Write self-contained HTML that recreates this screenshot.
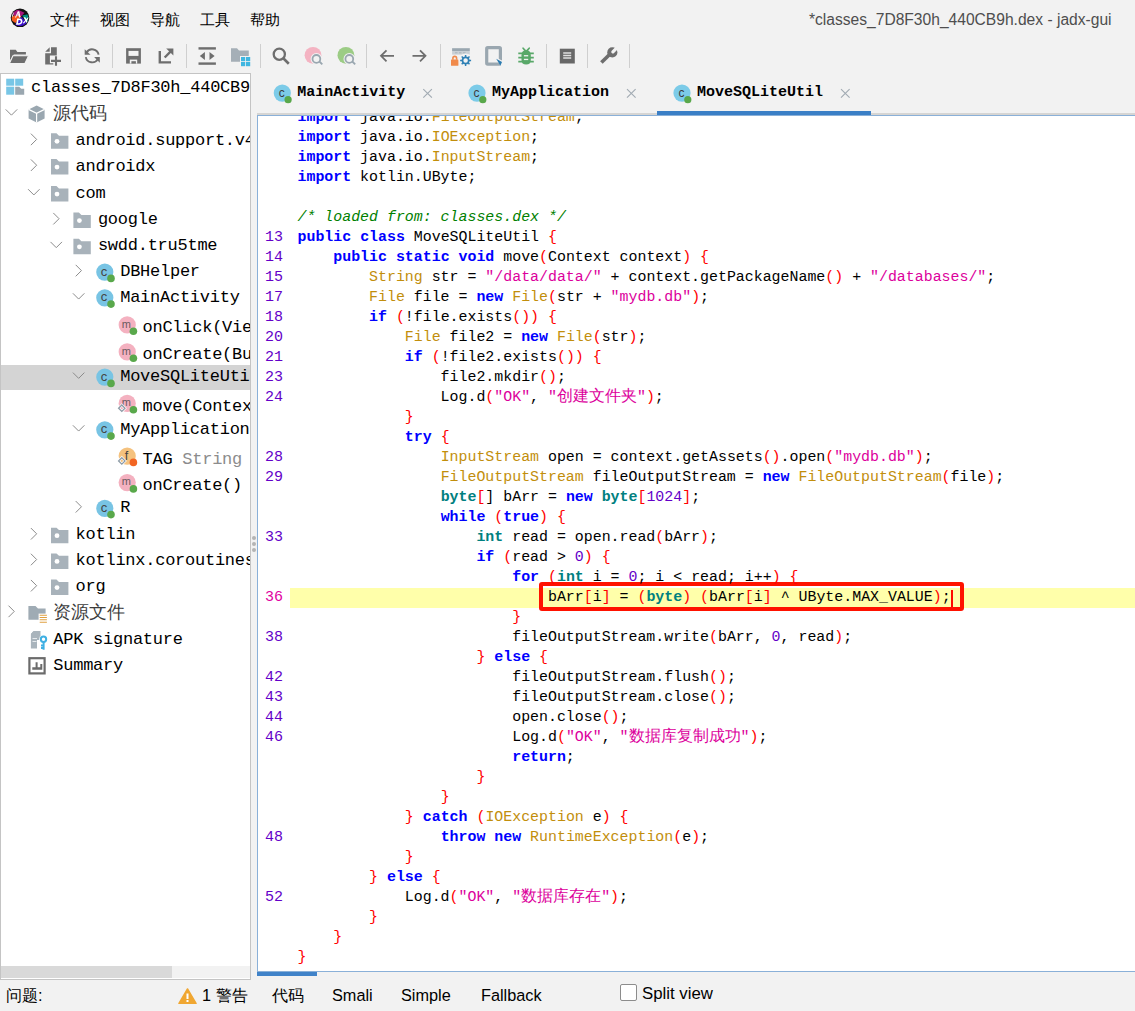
<!DOCTYPE html>
<html><head><meta charset="utf-8"><style>
*{margin:0;padding:0;box-sizing:border-box}
html,body{width:1135px;height:1011px;overflow:hidden;background:#f2f2f2;font-family:"Liberation Sans",sans-serif}
.a{position:absolute}
.menu{position:absolute;top:9.5px;font-size:15px;line-height:19px;color:#000;white-space:nowrap}
.title{position:absolute;left:809px;top:10px;font-size:15.6px;line-height:20px;color:#4e4e4e;white-space:nowrap}
.sep{position:absolute;top:44px;width:1px;height:24px;background:#cfcfcf}
#tree{position:absolute;left:0;top:73px;width:251px;height:907px;background:#fff;border:1px solid #c4c4c4;overflow:hidden}
.tr{position:absolute;font-family:"Liberation Mono",monospace;font-size:17px;letter-spacing:-0.25px;line-height:22px;white-space:nowrap;color:#000}
.gr{color:#8c8c8c}
.zh{font-family:"Liberation Serif",serif;color:#3c3c3c;font-size:18.3px;position:relative;top:-1px}
#code{position:absolute;left:257px;top:115px;width:878px;height:857px;background:#fff;border:1px solid #8ab0d8;border-right:none;overflow:hidden}
.cl{position:absolute;left:0;top:0;width:878px;height:858px}
pre,.cr{position:absolute;left:297.5px;white-space:pre;height:20px;font-family:"Liberation Mono",monospace;font-size:14.92px;line-height:20px;color:#000}
.k{color:#0000ff;font-weight:bold}
.t{color:#008080;font-weight:bold}
.c{color:#c28e0c}
.s{color:#dc009c}
.m{color:#008000;font-style:italic}
.p{color:#ff0000}
.n{color:#6400c8}
.zc{font-size:16px}
.ln{position:absolute;left:258px;width:25px;text-align:right;font-family:"Liberation Mono",monospace;font-size:15px;line-height:20px;color:#6400c8}
.ln.cur{color:#e000a0}
.tab{position:absolute;top:83px;font-family:"Liberation Mono",monospace;font-weight:bold;font-size:15px;line-height:20px;color:#000;white-space:nowrap}
.st{position:absolute;top:986px;font-size:16.3px;line-height:19px;color:#000;white-space:nowrap}
</style></head><body>
<svg class="a" style="left:0;top:0" width="1135" height="80" viewBox="0 0 1135 80">
 <defs><clipPath id="lc"><circle cx="20" cy="17.8" r="8.4"/></clipPath></defs>
 <circle cx="20" cy="17.8" r="9.3" fill="#111"/><g clip-path="url(#lc)">
 <path d="M11.5,12 L17.6,9.6 L24.5,12.8 L21.5,15.9 L14,15.8z" fill="#a3147c"/>
 <path d="M10.8,17.5 L14,15.6 L21.5,15.9 L15.4,23 L11.6,20.5z" fill="#f25a1e"/>
 <path d="M22.1,15.4 L28.9,14 L29.4,19.5 L27.2,23.6 L24,18z" fill="#009080"/>
 <path d="M14.8,24.6 L21.5,16.7 L27.2,23.6 L23.7,26.1 L17.1,26.4z" fill="#3a10c8"/>
 <path d="M12.2,12.3 L13.8,12.3 L12.8,16.8 L11,16.2z" fill="#fff"/>
 <path d="M15,17.4 L17.8,11.2 L19.3,11.2 L20.6,17.4 L19,17.4 L18.6,15.6 L16.8,15.6 L16.1,17.4z M17.2,14.4 L18.4,14.4 L18.2,12.9z" fill="#fff" fill-rule="evenodd"/>
 <path d="M17.2,18.5 L19.5,18.5 Q23.2,18.8 22.3,22.6 Q21.6,25 18.4,24.7 L16,24.7z M18.6,20 L17.9,23.3 L19,23.3 Q20.8,23.1 20.9,21.5 Q21,20 19.3,20z" fill="#fff" fill-rule="evenodd"/>
 <path d="M23.6,17.2 L25.4,17.2 L26.3,19.1 L28,17.2 L29.3,17.4 L27,20.2 L28.3,23.2 L26.7,23.4 L25.8,21.3 L23.9,23.4 L22.8,23 L25.1,20.2z" fill="#fff"/></g>
</svg>
<div class="menu" style="left:50px">文件</div>
<div class="menu" style="left:100px">视图</div>
<div class="menu" style="left:150px">导航</div>
<div class="menu" style="left:200px">工具</div>
<div class="menu" style="left:250px">帮助</div>
<div class="title">*classes_7D8F30h_440CB9h.dex - jadx-gui</div>
<svg class="a" style="left:0;top:0" width="660" height="76" viewBox="0 0 660 76">
<path d="M10,49.8 H15.8 L17.4,51.9 H25.9 V54.6 H13.8 L10,60.5z" fill="#6e6e6e"/>
<path d="M12.9,55.7 H28.6 L24.9,63.6 H9.4z" fill="#6e6e6e" stroke="#f2f2f2" stroke-width="1.1"/>
<path d="M45.2,51.7 L49.7,47.2 V51.7z" fill="#6e6e6e"/>
<path d="M45.2,53.2 H51 V47.2 H56.8 V55.4 H49.9 V63.3 H53.3 V64.6 H45.2z" fill="#6e6e6e"/>
<path d="M50.8,60.9 H61.2 M56,56 V65.8" stroke="#f2f2f2" stroke-width="3.6"/>
<path d="M51,60.9 H61 M56,56.2 V65.7" stroke="#6e6e6e" stroke-width="2.1"/>
<path d="M98.6,54.7 A6.5,6.5 0 0 0 86.57,52.6" stroke="#6e6e6e" stroke-width="1.9" fill="none"/>
<path d="M84.7,49.2 L84.7,54.7 L90.5,54.7z" fill="#6e6e6e"/>
<path d="M85.8,57.1 A6.5,6.5 0 0 0 97.83,59.1" stroke="#6e6e6e" stroke-width="1.9" fill="none"/>
<path d="M94.1,57.1 L99.8,57.1 L99.8,62.8z" fill="#6e6e6e"/>
<rect x="126.1" y="48.2" width="14.8" height="15.4" fill="#6e6e6e"/>
<rect x="128.5" y="50.9" width="10" height="5" fill="#f2f2f2"/>
<rect x="129.8" y="59.6" width="7.4" height="4" fill="#f2f2f2"/><rect x="131.4" y="61.2" width="4.5" height="2.4" fill="#6e6e6e"/>
<path d="M159.8,50.9 V62.4 H171" stroke="#6e6e6e" stroke-width="2.4" fill="none"/>
<path d="M164.7,57.5 L170.5,51.7" stroke="#6e6e6e" stroke-width="2.4"/><path d="M166.2,48.5 H173.4 V55.4z" fill="#6e6e6e"/>
<rect x="198.5" y="47.2" width="17.4" height="2.4" fill="#6e6e6e"/><rect x="198.5" y="62.4" width="17.4" height="2.4" fill="#6e6e6e"/>
<path d="M199.8,55.9 L204.9,51.9 V59.9z M214.6,55.9 L209.5,51.9 V59.9z" fill="#6e6e6e"/>
<path d="M231,48.2 H237 L239,50.5 H248.8 V61.7 H231z" fill="#a5afb7"/>
<rect x="240" y="56" width="10.6" height="10.6" fill="#f2f2f2"/>
<rect x="241" y="57" width="4.2" height="4.2" fill="#40b6e0"/><rect x="246" y="57" width="4.2" height="4.2" fill="#40b6e0"/>
<rect x="241" y="62" width="4.2" height="4.2" fill="#40b6e0"/><rect x="246" y="62" width="4.2" height="4.2" fill="#40b6e0"/>
<circle cx="279.3" cy="54.2" r="5.6" stroke="#6e6e6e" stroke-width="2.3" fill="none"/><path d="M283.3,58.3 L288.8,63.7" stroke="#6e6e6e" stroke-width="2.6"/>
<circle cx="313" cy="55.3" r="8.4" fill="#f4b3c2"/><circle cx="316.4" cy="58.9" r="5.8" fill="#f2f2f2"/>
<circle cx="316.4" cy="58.9" r="3.9" stroke="#9aa7b0" stroke-width="1.8" fill="none"/><path d="M319.4,61.5 L322.3,64.4" stroke="#9aa7b0" stroke-width="1.8"/>
<circle cx="345.9" cy="55.3" r="8.4" fill="#9ccc85"/><circle cx="349.3" cy="58.9" r="5.8" fill="#f2f2f2"/>
<circle cx="349.3" cy="58.9" r="3.9" stroke="#9aa7b0" stroke-width="1.8" fill="none"/><path d="M352.3,61.5 L355.2,64.4" stroke="#9aa7b0" stroke-width="1.8"/>
<path d="M381,55.8 H394 M386.5,50.3 L381,55.8 L386.5,61.3" stroke="#6e6e6e" stroke-width="1.8" fill="none"/>
<path d="M412.5,55.8 H425.5 M420,50.3 L425.5,55.8 L420,61.3" stroke="#6e6e6e" stroke-width="1.8" fill="none"/>
<rect x="452.1" y="48.2" width="17.7" height="2.8" fill="#9aa7b0"/><rect x="452.1" y="51" width="17.7" height="3.6" fill="#c9d0d5"/>
<path d="M455,52.8 h2.5 M459,52.8 h2.5 M463,52.8 h2.5" stroke="#aab4bb" stroke-width="1"/>
<rect x="451" y="59.6" width="7.4" height="6.1" rx="0.5" fill="#f08a4b"/><path d="M452.9,59.8 v-1.6 a1.85,1.85 0 0 1 3.7,0 v1.6" stroke="#f08a4b" stroke-width="1.6" fill="none"/>
<circle cx="465.6" cy="60.4" r="6.8" fill="#f2f2f2"/>
<circle cx="465.6" cy="60.4" r="3.1" stroke="#2f80b5" stroke-width="1.7" fill="none"/>
<path d="M465.6,54.9 V57 M465.6,63.8 V65.9 M460.1,60.4 H462.2 M469,60.4 H471.1 M461.7,56.5 L463.2,58 M468,62.8 L469.5,64.3 M469.5,56.5 L468,58 M463.2,62.8 L461.7,64.3" stroke="#2f80b5" stroke-width="1.5"/>
<rect x="486.7" y="47.7" width="13.7" height="16.4" rx="1" stroke="#9aa7b0" stroke-width="3.2" fill="none"/>
<path d="M495,57 L503.5,61.2 L501.5,67 z" fill="#f2f2f2"/>
<path d="M496.2,58.8 L502,62 L500.4,65.7 z" fill="#2b7bb0"/>
<path d="M521.5,55.2 Q521.5,50.3 526.15,50.3 Q530.8,50.3 530.8,55.2 V60 Q530.8,64.6 526.15,64.6 Q521.5,64.6 521.5,60z" fill="#59a869"/>
<path d="M518.3,53.4 H533.8 M518.3,57.6 H533.8 M518.3,61.7 H533.8" stroke="#59a869" stroke-width="1.7"/>
<path d="M523.1,48.2 L525.3,50.6 M529.2,48.2 L527,50.6" stroke="#59a869" stroke-width="1.7" stroke-linecap="round"/>
<rect x="523.9" y="55.1" width="4.3" height="1.3" fill="#f2f2f2"/><rect x="523.9" y="58.8" width="4.3" height="1.3" fill="#f2f2f2"/>
<rect x="559.8" y="48.7" width="15" height="14.8" fill="#686868"/>
<path d="M563.2,53 h8 M563.2,55.5 h8 M563.2,58 h8" stroke="#e0e0e0" stroke-width="1.3"/>
<path d="M601.4,62.6 L609.6,54.4" stroke="#6e6e6e" stroke-width="3.6"/>
<circle cx="612.3" cy="52.4" r="5.1" fill="#6e6e6e"/>
<path d="M612.9,51.8 L619.5,45.2" stroke="#f2f2f2" stroke-width="3.3" stroke-linecap="round"/>
</svg><div class="sep" style="left:71px"></div><div class="sep" style="left:112px"></div><div class="sep" style="left:186px"></div><div class="sep" style="left:260px"></div><div class="sep" style="left:366px"></div><div class="sep" style="left:440px"></div><div class="sep" style="left:546px"></div><div class="sep" style="left:587px"></div><div class="sep" style="left:629px"></div>
<div id="tree">
<svg class="a" style="left:-1px;top:-74px" width="251" height="980" viewBox="0 0 251 980">
 <rect x="0" y="365" width="251" height="25" fill="#d4d4d4"/>
 <rect x="6.200000000000003" y="78.7" width="8" height="7" fill="#78c6e6"/><rect x="15.200000000000003" y="78.7" width="8" height="7" fill="#78c6e6"/><rect x="6.200000000000003" y="86.7" width="8" height="8" fill="#78c6e6"/><path d="M15.200000000000003,86.7 h4 l2,2 h3 v6 h-9z" fill="#9aa7b0"/><path d="M5.7,109.4 l5.75,5.75 l5.75,-5.75" stroke="#8c8c8c" stroke-width="1" fill="none"/><path d="M36.6,105.4 l8,4 v9 l-8,4 l-8,-4 v-9z" fill="#9aa7b0"/><path d="M28.6,109.4 l8,4 l8,-4 M36.6,113.4 v9" stroke="#fff" stroke-width="1.2" fill="none"/><path d="M30.9,133.65 l5.75,5.75 l-5.75,5.75" stroke="#8c8c8c" stroke-width="1" fill="none"/><path d="M51.0,133.3 h5.5 l2.5,2.4 h9.4 v13.1 h-17.4z" fill="#a8b2ba"/><circle cx="57.0" cy="141.3" r="2.4" fill="#fff"/><path d="M30.9,159.45 l5.75,5.75 l-5.75,5.75" stroke="#8c8c8c" stroke-width="1" fill="none"/><path d="M51.0,159.1 h5.5 l2.5,2.4 h9.4 v13.1 h-17.4z" fill="#a8b2ba"/><circle cx="57.0" cy="167.1" r="2.4" fill="#fff"/><path d="M28.099999999999998,189.2 l5.75,5.75 l5.75,-5.75" stroke="#8c8c8c" stroke-width="1" fill="none"/><path d="M51.0,186.1 h5.5 l2.5,2.4 h9.4 v13.1 h-17.4z" fill="#a8b2ba"/><circle cx="57.0" cy="194.1" r="2.4" fill="#fff"/><path d="M53.3,212.95 l5.75,5.75 l-5.75,5.75" stroke="#8c8c8c" stroke-width="1" fill="none"/><path d="M73.4,212.6 h5.5 l2.5,2.4 h9.4 v13.1 h-17.4z" fill="#a8b2ba"/><circle cx="79.4" cy="220.6" r="2.4" fill="#fff"/><path d="M50.5,241.9 l5.75,5.75 l5.75,-5.75" stroke="#8c8c8c" stroke-width="1" fill="none"/><path d="M73.4,238.8 h5.5 l2.5,2.4 h9.4 v13.1 h-17.4z" fill="#a8b2ba"/><circle cx="79.4" cy="246.8" r="2.4" fill="#fff"/><path d="M75.69999999999999,264.85 l5.75,5.75 l-5.75,5.75" stroke="#8c8c8c" stroke-width="1" fill="none"/><circle cx="104.79999999999998" cy="272.1" r="8.6" fill="#78c4e4"/><text x="103.99999999999999" y="275.70000000000005" font-family="Liberation Sans" font-size="13" fill="#444" text-anchor="middle">c</text><circle cx="110.99999999999999" cy="278.40000000000003" r="3.8" fill="#59a84b"/><path d="M72.89999999999999,293.3 l5.75,5.75 l5.75,-5.75" stroke="#8c8c8c" stroke-width="1" fill="none"/><circle cx="104.79999999999998" cy="297.8" r="8.6" fill="#78c4e4"/><text x="103.99999999999999" y="301.40000000000003" font-family="Liberation Sans" font-size="13" fill="#444" text-anchor="middle">c</text><circle cx="110.99999999999999" cy="304.1" r="3.8" fill="#59a84b"/><circle cx="127.19999999999999" cy="324.9" r="8.6" fill="#f4b1c0"/><text x="126.39999999999999" y="327.5" font-family="Liberation Sans" font-size="11" fill="#6a5a5e" text-anchor="middle">m</text><circle cx="133.39999999999998" cy="331.2" r="3.8" fill="#59a84b"/><circle cx="127.19999999999999" cy="351.9" r="8.6" fill="#f4b1c0"/><text x="126.39999999999999" y="354.5" font-family="Liberation Sans" font-size="11" fill="#6a5a5e" text-anchor="middle">m</text><circle cx="133.39999999999998" cy="358.2" r="3.8" fill="#59a84b"/><path d="M72.89999999999999,372.6 l5.75,5.75 l5.75,-5.75" stroke="#8c8c8c" stroke-width="1" fill="none"/><circle cx="104.79999999999998" cy="377.1" r="8.6" fill="#78c4e4"/><text x="103.99999999999999" y="380.70000000000005" font-family="Liberation Sans" font-size="13" fill="#444" text-anchor="middle">c</text><circle cx="110.99999999999999" cy="383.40000000000003" r="3.8" fill="#59a84b"/><circle cx="127.19999999999999" cy="403.4" r="8.6" fill="#f4b1c0"/><text x="126.39999999999999" y="406.0" font-family="Liberation Sans" font-size="11" fill="#6a5a5e" text-anchor="middle">m</text><circle cx="133.39999999999998" cy="409.7" r="3.8" fill="#59a84b"/><path d="M121.79999999999998,405.0 l3.2,3.2 l-3.2,3.2 l-3.2,-3.2z" fill="none" stroke="#fff" stroke-width="2.6"/><path d="M121.79999999999998,405.0 l3.2,3.2 l-3.2,3.2 l-3.2,-3.2z" fill="none" stroke="#8d9ba6" stroke-width="1.3"/><path d="M72.89999999999999,425.3 l5.75,5.75 l5.75,-5.75" stroke="#8c8c8c" stroke-width="1" fill="none"/><circle cx="104.79999999999998" cy="429.8" r="8.6" fill="#78c4e4"/><text x="103.99999999999999" y="433.40000000000003" font-family="Liberation Sans" font-size="13" fill="#444" text-anchor="middle">c</text><circle cx="110.99999999999999" cy="436.1" r="3.8" fill="#59a84b"/><circle cx="127.19999999999999" cy="456.09999999999997" r="8.6" fill="#f5c27e"/><text x="126.39999999999999" y="459.7" font-family="Liberation Sans" font-size="12.5" fill="#444" text-anchor="middle">f</text><circle cx="133.39999999999998" cy="462.4" r="3.8" fill="#f26522"/><path d="M121.79999999999998,457.7 l3.2,3.2 l-3.2,3.2 l-3.2,-3.2z" fill="none" stroke="#fff" stroke-width="2.6"/><path d="M121.79999999999998,457.7 l3.2,3.2 l-3.2,3.2 l-3.2,-3.2z" fill="none" stroke="#8d9ba6" stroke-width="1.3"/><circle cx="127.19999999999999" cy="482.59999999999997" r="8.6" fill="#f4b1c0"/><text x="126.39999999999999" y="485.2" font-family="Liberation Sans" font-size="11" fill="#6a5a5e" text-anchor="middle">m</text><circle cx="133.39999999999998" cy="488.9" r="3.8" fill="#59a84b"/><path d="M75.69999999999999,501.05 l5.75,5.75 l-5.75,5.75" stroke="#8c8c8c" stroke-width="1" fill="none"/><circle cx="104.79999999999998" cy="508.3" r="8.6" fill="#78c4e4"/><text x="103.99999999999999" y="511.90000000000003" font-family="Liberation Sans" font-size="13" fill="#444" text-anchor="middle">c</text><circle cx="110.99999999999999" cy="514.6" r="3.8" fill="#59a84b"/><path d="M30.9,528.05 l5.75,5.75 l-5.75,5.75" stroke="#8c8c8c" stroke-width="1" fill="none"/><path d="M51.0,527.6999999999999 h5.5 l2.5,2.4 h9.4 v13.1 h-17.4z" fill="#a8b2ba"/><circle cx="57.0" cy="535.6999999999999" r="2.4" fill="#fff"/><path d="M30.9,553.75 l5.75,5.75 l-5.75,5.75" stroke="#8c8c8c" stroke-width="1" fill="none"/><path d="M51.0,553.4 h5.5 l2.5,2.4 h9.4 v13.1 h-17.4z" fill="#a8b2ba"/><circle cx="57.0" cy="561.4" r="2.4" fill="#fff"/><path d="M30.9,579.95 l5.75,5.75 l-5.75,5.75" stroke="#8c8c8c" stroke-width="1" fill="none"/><path d="M51.0,579.6 h5.5 l2.5,2.4 h9.4 v13.1 h-17.4z" fill="#a8b2ba"/><circle cx="57.0" cy="587.6" r="2.4" fill="#fff"/><path d="M8.5,605.65 l5.75,5.75 l-5.75,5.75" stroke="#8c8c8c" stroke-width="1" fill="none"/><path d="M28.4,605.9 H35.5 L38,608.4 H45.6 V619.8 H28.4z" fill="#9fabb4"/><rect x="38.6" y="613.6" width="9" height="10" fill="#fff"/><path d="M39.7,615.3 h7.2 M39.7,617.5 h7.2 M39.7,619.8 h7.2 M39.7,622.2 h7.2" stroke="#e0a040" stroke-width="1.1"/><path d="M33.6,631.1 H40.5 V640 H37 V648.4 H30.9 V634z" fill="#a9b4bc"/><path d="M30.9,634 L33.6,631.1 V634z" fill="#a9b4bc"/><path d="M32.5,638.5 h4.5 M32.5,641.5 h4" stroke="#e6eaed" stroke-width="1.2"/><circle cx="43.5" cy="639.3" r="4.4" fill="#fff"/><circle cx="43.5" cy="639.3" r="2.7" fill="none" stroke="#3fb0e3" stroke-width="2"/><path d="M43.6,641.5 V649.7 M41,645.5 h2.6 M41,648 h2.6" stroke="#3fb0e3" stroke-width="2"/><rect x="29.4" y="658.2" width="15.2" height="15.2" fill="none" stroke="#6b6b6b" stroke-width="2.2"/><path d="M32.3,667.3 H42.3 V669.8 H32.3z M35.6,662.3 H37.6 V667.5 H35.6z M40.3,664 H42.3 V667.5 H40.3z" fill="#6b6b6b"/>
 <rect x="0" y="966" width="250" height="12" fill="#f2f2f2"/><rect x="0" y="966" width="172" height="12" fill="#d9d9d9"/>
</svg>
<div class="a" style="left:-1px;top:-74px;width:251px;height:980px">
<div class="tr" style="left:31.0px;top:77.2px">classes_7D8F30h_440CB9</div><div class="tr" style="left:53.3px;top:102.9px"><span class="zh">源代码</span></div><div class="tr" style="left:75.6px;top:129.9px">android.support.v4</div><div class="tr" style="left:75.6px;top:155.7px">androidx</div><div class="tr" style="left:75.6px;top:182.7px">com</div><div class="tr" style="left:97.9px;top:209.2px">google</div><div class="tr" style="left:97.9px;top:235.4px">swdd.tru5tme</div><div class="tr" style="left:120.2px;top:261.1px">DBHelper</div><div class="tr" style="left:120.2px;top:286.8px">MainActivity</div><div class="tr" style="left:142.5px;top:317.2px">onClick(View</div><div class="tr" style="left:142.5px;top:344.2px">onCreate(Bundle</div><div class="tr" style="left:120.2px;top:366.1px">MoveSQLiteUtil</div><div class="tr" style="left:142.5px;top:395.7px">move(Context</div><div class="tr" style="left:120.2px;top:418.8px">MyApplication</div><div class="tr" style="left:142.5px;top:449.2px">TAG <span class="gr">String</span></div><div class="tr" style="left:142.5px;top:474.9px">onCreate()</div><div class="tr" style="left:120.2px;top:497.3px">R</div><div class="tr" style="left:75.6px;top:524.3px">kotlin</div><div class="tr" style="left:75.6px;top:550.0px">kotlinx.coroutines</div><div class="tr" style="left:75.6px;top:576.2px">org</div><div class="tr" style="left:53.3px;top:601.9px"><span class="zh">资源文件</span></div><div class="tr" style="left:53.3px;top:628.9px">APK signature</div><div class="tr" style="left:53.3px;top:654.7px">Summary</div>
</div>
</div>
<div class="a" style="left:251px;top:73px;width:6px;height:906px;background:#f2f2f2"></div>
<div class="a" style="left:252px;top:535.8px;width:4px;height:4px;border-radius:50%;background:#b4b4b4"></div>
<div class="a" style="left:252px;top:542.1px;width:4px;height:4px;border-radius:50%;background:#b4b4b4"></div>
<div class="a" style="left:252px;top:548.3px;width:4px;height:4px;border-radius:50%;background:#b4b4b4"></div>
<svg class="a" style="left:0;top:70px" width="1135" height="45" viewBox="0 70 1135 45"><circle cx="282.3" cy="93.1" r="8.6" fill="#7ccbe8"/><text x="281.8" y="97.1" font-family="Liberation Sans" font-size="12" fill="#3c3c3c" text-anchor="middle">c</text><circle cx="288.1" cy="99.69999999999999" r="3.6" fill="#59a84b"/><path d="M423.3,89.2 l8.6,8.5 M431.90000000000003,89.2 l-8.6,8.5" stroke="#a2abb3" stroke-width="1.15"/><circle cx="477" cy="93.1" r="8.6" fill="#7ccbe8"/><text x="476.5" y="97.1" font-family="Liberation Sans" font-size="12" fill="#3c3c3c" text-anchor="middle">c</text><circle cx="482.8" cy="99.69999999999999" r="3.6" fill="#59a84b"/><path d="M627,89.2 l8.6,8.5 M635.6,89.2 l-8.6,8.5" stroke="#a2abb3" stroke-width="1.15"/><circle cx="682" cy="93.1" r="8.6" fill="#7ccbe8"/><text x="681.5" y="97.1" font-family="Liberation Sans" font-size="12" fill="#3c3c3c" text-anchor="middle">c</text><circle cx="687.8" cy="99.69999999999999" r="3.6" fill="#59a84b"/><path d="M841,89.2 l8.6,8.5 M849.6,89.2 l-8.6,8.5" stroke="#a2abb3" stroke-width="1.15"/></svg><div class="tab" style="left:297.3px">MainActivity</div><div class="tab" style="left:492px">MyApplication</div><div class="tab" style="left:697px">MoveSQLiteUtil</div>
<div class="a" style="left:257px;top:113px;width:878px;height:2px;background:#d6d5d3"></div>
<div class="a" style="left:657px;top:111px;width:214px;height:4px;background:#3a7fc6"></div>
<div id="code"><div class="cl" style="left:-258px;top:-116px;width:1135px;height:973px">
<div class="a" style="left:290px;top:588px;width:845px;height:20px;background:#ffffaa"></div>
<div class="a" style="left:539px;top:582px;width:425px;height:29px;border:4px solid #ff1200;border-radius:3px"></div>
<div class="a" style="left:951px;top:590px;width:2px;height:17px;background:#ff0a00"></div>
<div class="ln" style="top:228px">13</div><div class="ln" style="top:248px">14</div><div class="ln" style="top:268px">15</div><div class="ln" style="top:288px">17</div><div class="ln" style="top:308px">18</div><div class="ln" style="top:328px">20</div><div class="ln" style="top:348px">21</div><div class="ln" style="top:368px">23</div><div class="ln" style="top:388px">24</div><div class="ln" style="top:448px">28</div><div class="ln" style="top:468px">29</div><div class="ln" style="top:528px">33</div><div class="ln cur" style="top:588px">36</div><div class="ln" style="top:628px">38</div><div class="ln" style="top:668px">42</div><div class="ln" style="top:688px">43</div><div class="ln" style="top:708px">44</div><div class="ln" style="top:728px">46</div><div class="ln" style="top:828px">48</div><div class="ln" style="top:888px">52</div>
<div class="cr" style="top:107.0px"><span class="k">import</span> java.io.<span class="c">FileOutputStream</span>;</div><div class="cr" style="top:127.0px"><span class="k">import</span> java.io.<span class="c">IOException</span>;</div><div class="cr" style="top:147.0px"><span class="k">import</span> java.io.<span class="c">InputStream</span>;</div><div class="cr" style="top:167.0px"><span class="k">import</span> kotlin.UByte;</div><div class="cr" style="top:187.0px"></div><div class="cr" style="top:207.0px"><span class="m">/* loaded from: classes.dex */</span></div><div class="cr" style="top:227.0px"><span class="k">public</span> <span class="k">class</span> MoveSQLiteUtil <span class="p">{</span></div><div class="cr" style="top:247.0px">    <span class="k">public</span> <span class="k">static</span> <span class="k">void</span> move<span class="p">(</span>Context context<span class="p">)</span> <span class="p">{</span></div><div class="cr" style="top:267.0px">        <span class="c">String</span> str = <span class="s">&quot;/data/data/&quot;</span> + context.getPackageName<span class="p">()</span> + <span class="s">&quot;/databases/&quot;</span>;</div><div class="cr" style="top:287.0px">        <span class="c">File</span> file = <span class="k">new</span> <span class="c">File</span><span class="p">(</span>str + <span class="s">&quot;mydb.db&quot;</span><span class="p">)</span>;</div><div class="cr" style="top:307.0px">        <span class="k">if</span> <span class="p">(</span>!file.exists<span class="p">())</span> <span class="p">{</span></div><div class="cr" style="top:327.0px">            <span class="c">File</span> file2 = <span class="k">new</span> <span class="c">File</span><span class="p">(</span>str<span class="p">)</span>;</div><div class="cr" style="top:347.0px">            <span class="k">if</span> <span class="p">(</span>!file2.exists<span class="p">())</span> <span class="p">{</span></div><div class="cr" style="top:367.0px">                file2.mkdir<span class="p">()</span>;</div><div class="cr" style="top:387.0px">                Log.d<span class="p">(</span><span class="s">&quot;OK&quot;</span>, <span class="s">&quot;<span class="zc">创建文件夹</span>&quot;</span><span class="p">)</span>;</div><div class="cr" style="top:407.0px">            <span class="p">}</span></div><div class="cr" style="top:427.0px">            <span class="k">try</span> <span class="p">{</span></div><div class="cr" style="top:447.0px">                <span class="c">InputStream</span> open = context.getAssets<span class="p">()</span>.open<span class="p">(</span><span class="s">&quot;mydb.db&quot;</span><span class="p">)</span>;</div><div class="cr" style="top:467.0px">                <span class="c">FileOutputStream</span> fileOutputStream = <span class="k">new</span> <span class="c">FileOutputStream</span><span class="p">(</span>file<span class="p">)</span>;</div><div class="cr" style="top:487.0px">                <span class="t">byte</span><span class="p">[</span>] bArr = <span class="k">new</span> <span class="t">byte</span><span class="p">[</span><span class="n">1024</span><span class="p">]</span>;</div><div class="cr" style="top:507.0px">                <span class="k">while</span> <span class="p">(</span><span class="k">true</span><span class="p">)</span> <span class="p">{</span></div><div class="cr" style="top:527.0px">                    <span class="t">int</span> read = open.read<span class="p">(</span>bArr<span class="p">)</span>;</div><div class="cr" style="top:547.0px">                    <span class="k">if</span> <span class="p">(</span>read &gt; <span class="n">0</span><span class="p">)</span> <span class="p">{</span></div><div class="cr" style="top:567.0px">                        <span class="k">for</span> <span class="p">(</span><span class="t">int</span> i = <span class="n">0</span>; i &lt; read; i++<span class="p">)</span> <span class="p">{</span></div><div class="cr" style="top:587.0px">                            bArr<span class="p">[</span>i<span class="p">]</span> = <span class="p">(</span><span class="t">byte</span><span class="p">)</span> <span class="p">(</span>bArr<span class="p">[</span>i<span class="p">]</span> ^ UByte.MAX_VALUE<span class="p">)</span>;</div><div class="cr" style="top:607.0px">                        <span class="p">}</span></div><div class="cr" style="top:627.0px">                        fileOutputStream.write<span class="p">(</span>bArr, <span class="n">0</span>, read<span class="p">)</span>;</div><div class="cr" style="top:647.0px">                    <span class="p">}</span> <span class="k">else</span> <span class="p">{</span></div><div class="cr" style="top:667.0px">                        fileOutputStream.flush<span class="p">()</span>;</div><div class="cr" style="top:687.0px">                        fileOutputStream.close<span class="p">()</span>;</div><div class="cr" style="top:707.0px">                        open.close<span class="p">()</span>;</div><div class="cr" style="top:727.0px">                        Log.d<span class="p">(</span><span class="s">&quot;OK&quot;</span>, <span class="s">&quot;<span class="zc">数据库复制成功</span>&quot;</span><span class="p">)</span>;</div><div class="cr" style="top:747.0px">                        <span class="k">return</span>;</div><div class="cr" style="top:767.0px">                    <span class="p">}</span></div><div class="cr" style="top:787.0px">                <span class="p">}</span></div><div class="cr" style="top:807.0px">            <span class="p">}</span> <span class="k">catch</span> <span class="p">(</span><span class="c">IOException</span> e<span class="p">)</span> <span class="p">{</span></div><div class="cr" style="top:827.0px">                <span class="k">throw</span> <span class="k">new</span> <span class="c">RuntimeException</span><span class="p">(</span>e<span class="p">)</span>;</div><div class="cr" style="top:847.0px">            <span class="p">}</span></div><div class="cr" style="top:867.0px">        <span class="p">}</span> <span class="k">else</span> <span class="p">{</span></div><div class="cr" style="top:887.0px">            Log.d<span class="p">(</span><span class="s">&quot;OK&quot;</span>, <span class="s">&quot;<span class="zc">数据库存在</span>&quot;</span><span class="p">)</span>;</div><div class="cr" style="top:907.0px">        <span class="p">}</span></div><div class="cr" style="top:927.0px">    <span class="p">}</span></div><div class="cr" style="top:947.0px"><span class="p">}</span></div>
</div></div>

<div class="a" style="left:257px;top:972px;width:60px;height:4px;background:#4083c9"></div>
<div class="st" style="left:6px">问题:</div>
<svg class="a" style="left:178px;top:988px" width="19" height="16" viewBox="0 0 19 16"><path d="M9.5,1 L18,15.5 H1z" fill="#f0a732" stroke="#f0a732" stroke-linejoin="round" stroke-width="1.5"/><rect x="8.5" y="5.5" width="2" height="5.5" fill="#fff"/><rect x="8.5" y="12" width="2" height="2" fill="#fff"/></svg>
<div class="st" style="left:202px">1 警告</div>
<div class="st" style="left:272px">代码</div>
<div class="st" style="left:332px">Smali</div>
<div class="st" style="left:401px">Simple</div>
<div class="st" style="left:481px">Fallback</div>
<div class="a" style="left:620px;top:984px;width:17px;height:17px;border:1px solid #8c8c8c;border-radius:2px;background:#fff"></div>
<div class="st" style="left:642px;font-size:16.8px;top:984px">Split view</div>
</body></html>
